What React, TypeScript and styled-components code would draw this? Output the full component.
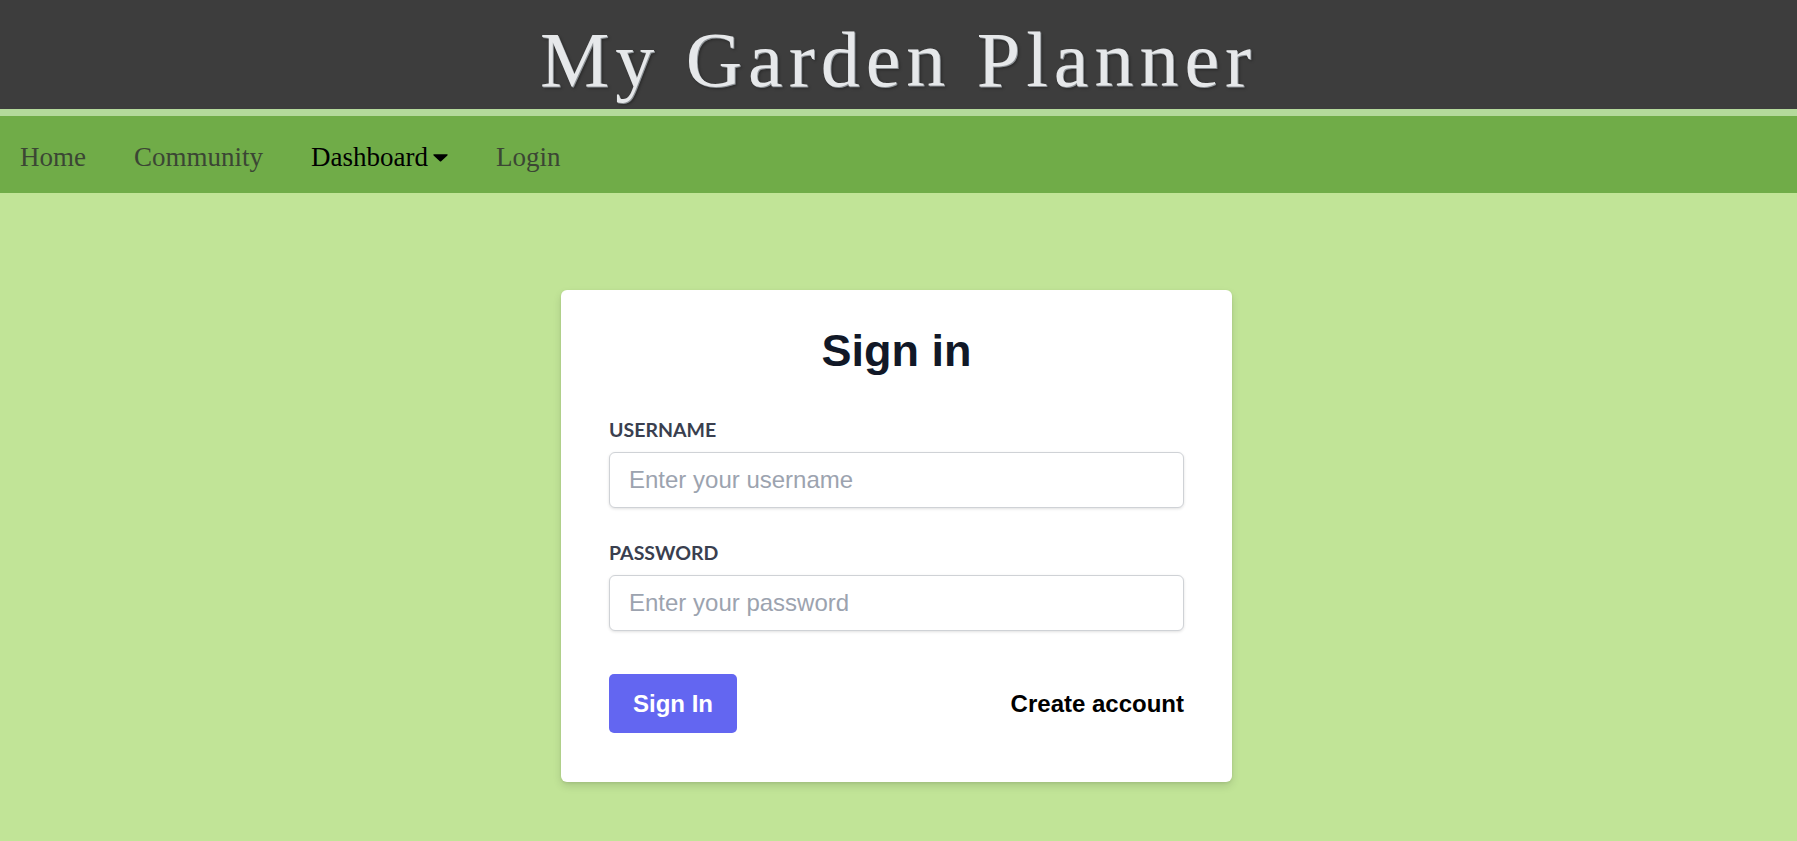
import React from "react";
import styled, { createGlobalStyle } from "styled-components";

const GlobalStyle = createGlobalStyle`
  * { box-sizing: border-box; }
  html, body { margin: 0; padding: 0; }
  body {
    background: #c1e497;
    min-height: 841px;
    font-family: "Liberation Sans", Arial, sans-serif;
  }
`;

const Page = styled.div`
  min-height: 841px;
  background: #c1e497;
`;

const Header = styled.header`
  height: 109px;
  background: #3d3d3d;
  display: flex;
  align-items: center;
  justify-content: center;
  padding-top: 11px;
`;

const Title = styled.h1`
  margin: 0;
  font-family: "Liberation Serif", "Times New Roman", serif;
  font-weight: 400;
  font-size: 78px;
  line-height: 1;
  letter-spacing: 6px;
  color: #e6e8ea;
  text-shadow: 1px 1px 0 #8d9296, 2px 2px 3px rgba(0, 0, 0, 0.35);
`;

const Nav = styled.nav`
  height: 84px;
  border-top: 7px solid #b4da9c;
  background: #70ac48;
  display: flex;
  align-items: center;
  gap: 48px;
  padding: 5px 0 0 20px;
`;

const NavItem = styled.a<{ $active?: boolean }>`
  display: flex;
  align-items: center;
  gap: 5px;
  font-family: "Liberation Serif", "Times New Roman", serif;
  font-size: 27px;
  line-height: 1;
  color: ${(p) => (p.$active ? "#000000" : "#3b4634")};
  text-decoration: none;
  cursor: pointer;
`;

const Main = styled.main`
  display: flex;
  justify-content: center;
  padding: 97px 4px 59px 0;
`;

const Card = styled.form`
  width: 671px;
  background: #ffffff;
  border-radius: 6px;
  box-shadow: 0 4px 8px rgba(0, 0, 0, 0.12), 0 1px 3px rgba(0, 0, 0, 0.08);
  padding: 35px 48px 49px;
  display: flex;
  flex-direction: column;
`;

const CardTitle = styled.h2`
  margin: 0 0 41px;
  text-align: center;
  font-family: "Liberation Sans", Arial, sans-serif;
  font-weight: 700;
  font-size: 45px;
  line-height: 52px;
  color: #111827;
`;

const Field = styled.div<{ $gap?: number }>`
  display: flex;
  flex-direction: column;
  gap: 10px;
  margin-bottom: ${(p) => p.$gap ?? 0}px;
`;

const Label = styled.label`
  font-family: Lato, "Open Sans", sans-serif;
  font-weight: 700;
  font-size: 19.5px;
  line-height: 24px;
  text-transform: uppercase;
  color: #3a3f4f;
`;

const Input = styled.input`
  width: 100%;
  height: 56px;
  border: 1px solid #cfd2d6;
  border-radius: 6px;
  padding: 0 19px;
  font-family: "Liberation Sans", Arial, sans-serif;
  font-size: 24px;
  color: #111827;
  background: #ffffff;
  box-shadow: 0 1px 3px rgba(0, 0, 0, 0.12);
  outline: none;
  &::placeholder {
    color: #9ca3af;
  }
`;

const Actions = styled.div`
  display: flex;
  align-items: center;
  justify-content: space-between;
  margin-top: 43px;
`;

const SubmitButton = styled.button`
  height: 59px;
  padding: 0 24px;
  border: none;
  border-radius: 5px;
  background: #6366f1;
  color: #ffffff;
  font-family: "Liberation Sans", Arial, sans-serif;
  font-weight: 700;
  font-size: 24px;
  cursor: pointer;
`;

const CreateLink = styled.a`
  font-family: "Liberation Sans", Arial, sans-serif;
  font-weight: 700;
  font-size: 24px;
  color: #000000;
  text-decoration: none;
  cursor: pointer;
`;

const Caret = () => (
  <svg width="15" height="9" viewBox="0 0 15 9" aria-hidden="true">
    <path d="M1 1.2 C0.4 1.2 0.1 1.9 0.6 2.4 L6.8 8.3 C7.2 8.7 7.8 8.7 8.2 8.3 L14.4 2.4 C14.9 1.9 14.6 1.2 14 1.2 Z" fill="#000" />
  </svg>
);

export default function App() {
  return (
    <Page>
      <GlobalStyle />
      <Header>
        <Title>My Garden Planner</Title>
      </Header>
      <Nav>
        <NavItem>Home</NavItem>
        <NavItem>Community</NavItem>
        <NavItem $active>
          Dashboard
          <Caret />
        </NavItem>
        <NavItem>Login</NavItem>
      </Nav>
      <Main>
        <Card onSubmit={(e) => e.preventDefault()}>
          <CardTitle>Sign in</CardTitle>
          <Field $gap={33}>
            <Label htmlFor="username">Username</Label>
            <Input id="username" type="text" placeholder="Enter your username" />
          </Field>
          <Field>
            <Label htmlFor="password">Password</Label>
            <Input id="password" type="password" placeholder="Enter your password" />
          </Field>
          <Actions>
            <SubmitButton type="submit">Sign In</SubmitButton>
            <CreateLink>Create account</CreateLink>
          </Actions>
        </Card>
      </Main>
    </Page>
  );
}
